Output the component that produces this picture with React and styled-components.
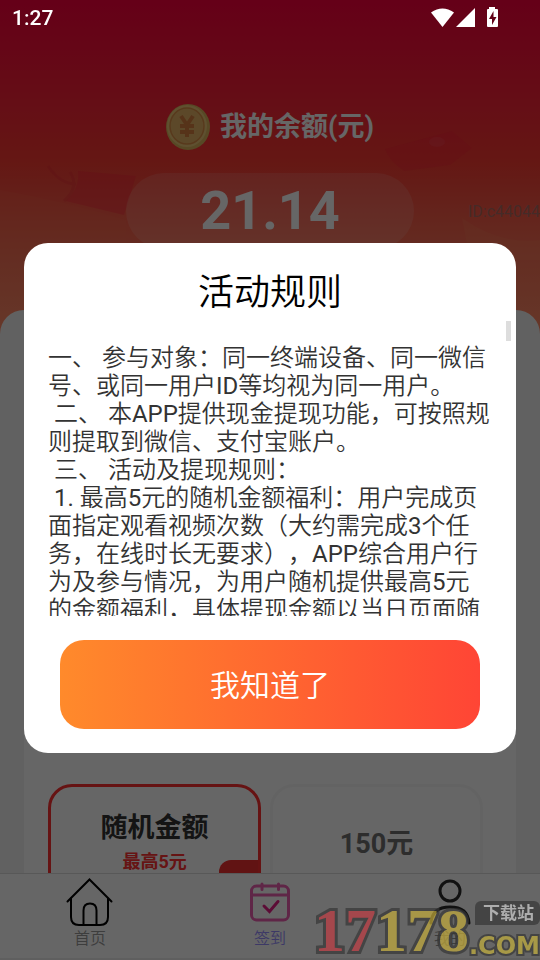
import React, { useState } from 'react';
import styled, { createGlobalStyle } from 'styled-components';

const GlobalStyle = createGlobalStyle`
  * {
    box-sizing: border-box;
  }
  body {
    margin: 0;
    font-family: Roboto, "Noto Sans CJK SC", sans-serif;
  }
  button {
    font-family: inherit;
    border: none;
    padding: 0;
    cursor: pointer;
  }
`;

const Screen = styled.div`
  display: flex;
  flex-direction: column;
  height: 100vh;
  overflow: hidden;
`;

const Content = styled.main`
  position: relative;
  flex: 1;
  min-height: 0;
  overflow: hidden;
  background: linear-gradient(#fc003c 0, #fc2338 100px, #fc3a32 160px, #fa5544 205px, #fa6e54 250px, #ff8a66 330px);
`;

const Decoration = styled.svg`
  position: absolute;
  top: 0;
  left: 0;
  width: 100%;
  height: 260px;
`;

const Header = styled.header`
  position: relative;
  padding-top: 104px;
`;

const BalanceTitle = styled.div`
  display: flex;
  align-items: center;
  justify-content: center;
  gap: 10px;
  height: 46px;
`;

const TitleText = styled.h1`
  margin: 0;
  color: #fff;
  font-size: 27px;
  font-weight: 700;
  line-height: 32px;
`;

const BalanceRow = styled.div`
  display: grid;
  grid-template-columns: 1fr 288px 1fr;
  align-items: center;
  margin: 23px 0 61px;
`;

const Amount = styled.div`
  grid-column: 2;
  height: 76px;
  border-radius: 38px;
  background: rgba(255, 255, 255, 0.12);
  color: #fff;
  font-size: 54px;
  font-weight: 700;
  line-height: 76px;
  text-align: center;
`;

const UserId = styled.div`
  padding-left: 54px;
  overflow: hidden;
  white-space: nowrap;
  color: rgba(120, 120, 120, 0.6);
  font-size: 16px;
`;

const Sheet = styled.section`
  position: relative;
  padding: 24px 24px 0;
  border-radius: 24px 24px 0 0;
  background: #f3f3f3;
`;

const Panel = styled.div`
  padding: 450px 24px 24px;
  border-radius: 24px;
  background: #fff;
`;

const Options = styled.div`
  display: flex;
  gap: 2%;
`;

const Option = styled.button`
  position: relative;
  display: flex;
  flex-direction: column;
  align-items: center;
  justify-content: center;
  width: 48%;
  height: 120px;
  overflow: hidden;
  border: 3px solid ${({ $active }) => ($active ? '#ff3030' : '#f8f8f8')};
  border-radius: 24px;
  background: #fff;
  color: ${({ $active }) => ($active ? '#333' : '#707070')};
`;

const OptionName = styled.span`
  font-size: 27px;
  font-weight: 700;
  line-height: 36px;
`;

const OptionNote = styled.span`
  color: #f33;
  font-size: 18px;
  font-weight: 700;
  line-height: 32px;
`;

const OptionBadge = styled.span`
  position: absolute;
  right: -3px;
  bottom: -3px;
  width: 42px;
  height: 44px;
  border-radius: 12px 0 0 0;
  background: #f33030;
`;

const TabBar = styled.nav`
  display: flex;
  border-top: 1px solid #ddd;
  border-bottom: 2px solid #eee;
  background: #fff;
`;

const Tab = styled.a`
  display: flex;
  flex: 1;
  flex-direction: column;
  align-items: center;
  padding: 4px 0 6px;
  color: ${({ $active }) => ($active ? '#9a90ff' : '#999')};
  font-size: 16px;
  font-weight: 350;
  line-height: 26px;
  text-decoration: none;
`;

const Overlay = styled.div`
  position: fixed;
  inset: 0;
  display: flex;
  align-items: center;
  justify-content: center;
  padding: 36px 24px 0;
  background: rgba(0, 0, 0, 0.6);
`;

const Modal = styled.div`
  position: relative;
  width: 100%;
  padding: 24px 0;
  border-radius: 24px;
  background: #fff;
`;

const ModalTitle = styled.h2`
  margin: 0;
  color: #000;
  font-size: 36px;
  font-weight: 350;
  line-height: 52px;
  text-align: center;
`;

const Rules = styled.div`
  height: 297px;
  margin-bottom: 24px;
  padding: 25px 24px 0;
  overflow-y: auto;
  scrollbar-width: none;
  color: #333;
  font-family: Roboto, "Noto Sans CJK SC DemiLight", "Noto Sans CJK SC", sans-serif;
  font-size: 24px;
  font-weight: 400;
  line-height: 28px;
  text-spacing-trim: space-all;
`;

const Rule = styled.p`
  margin: 0;
  white-space: pre-wrap;
`;

const ScrollThumb = styled.div`
  position: absolute;
  top: 78px;
  right: 5px;
  width: 5px;
  height: 20px;
  background: #ddd;
`;

const ConfirmButton = styled.button`
  display: block;
  width: calc(100% - 72px);
  height: 89px;
  margin: 0 auto;
  padding-bottom: 4px;
  border-radius: 24px;
  background: linear-gradient(90deg, #ff8a2b, #ff4535);
  color: #fff;
  font-size: 30px;
  font-weight: 350;
`;

const StatusBar = styled.div`
  position: fixed;
  top: 0;
  left: 0;
  right: 0;
  display: flex;
  align-items: center;
  justify-content: space-between;
  height: 36px;
  padding: 0 41px 0 12px;
  color: #fff;
`;

const Clock = styled.span`
  font-size: 21px;
  font-weight: 500;
`;

const Watermark = styled.div`
  position: fixed;
  right: 0;
  bottom: 0;
  display: flex;
  align-items: flex-end;
  opacity: 0.7;
  pointer-events: none;
`;

const Digits = styled.span`
  color: ${({ $color }) => $color};
  font-family: "Liberation Serif", serif;
  font-size: 62px;
  font-weight: 700;
  line-height: 60px;
  -webkit-text-stroke: 6px #373737;
  paint-order: stroke fill;
`;

const SiteColumn = styled.div`
  display: flex;
  flex-direction: column;
  gap: 7px;
`;

const SiteTag = styled.span`
  align-self: flex-end;
  padding: 0 6px 0 8px;
  border-radius: 6px 6px 6px 0;
  background: #373737;
  color: #ccc;
  font-size: 17px;
  font-weight: 700;
  line-height: 24px;
`;

const SiteDomain = styled.span`
  color: #c4b03b;
  font-family: "DejaVu Sans", sans-serif;
  font-size: 24px;
  font-weight: 700;
  line-height: 28px;
  -webkit-text-stroke: 4px #373737;
  paint-order: stroke fill;
`;

const CoinIcon = () => (
  <svg width="44" height="46" viewBox="0 0 44 46" aria-hidden="true">
    <ellipse cx="22" cy="23" rx="22" ry="23" fill="#d9b45c" />
    <ellipse cx="21" cy="22" rx="20" ry="21" fill="#eec878" />
    <ellipse cx="21" cy="22" rx="17" ry="18" fill="#e6b468" stroke="#dc9048" strokeWidth="1.5" />
    <path
      d="M15 12l6 9 6-9M21 21v12M14 22h14M14 28h14"
      fill="none"
      stroke="#d88040"
      strokeWidth="4"
    />
  </svg>
);

const Envelopes = () => (
  <Decoration viewBox="0 0 540 260" preserveAspectRatio="none" aria-hidden="true">
    <path d="M0 190Q60 200 126 220V260H0Z" fill="#ff7050" opacity="0.15" />
    <path d="M78 171L136 176 124 215 66 201Q80 188 78 171Z" fill="#fb1838" opacity="0.3" />
    <path d="M70 172Q80 187 64 201M48 166Q60 184 76 184" fill="none" stroke="#e01532" strokeWidth="3" opacity="0.2" />
    <path d="M385 149L452 131 472 148 450 165 404 171Q390 162 385 149Z" fill="#fb1838" opacity="0.25" />
    <ellipse cx="437" cy="142" rx="8" ry="5" fill="#ff5060" opacity="0.3" />
    <path d="M462 218Q500 245 540 240V260H470Z" fill="#ff8a60" opacity="0.2" />
  </Decoration>
);

const StatusIcons = () => (
  <svg width="68" height="22" viewBox="0 0 68 22" fill="#fff" aria-hidden="true">
    <path d="M0 5.500Q11.500-2.500 23 5.500L11.500 20Z" />
    <path d="M44 1V20H25Z" />
    <path d="M58 0h6v2h2q1 0 1 1v16q0 1-1 1h-9q-1 0-1-1V3q0-1 1-1h1Z" />
    <path d="M62.500 4L58 12h3v6l4.500-8h-3Z" fill="#620218" />
  </svg>
);

const HomeIcon = () => (
  <svg width="48" height="48" viewBox="0 0 48 48" fill="none" stroke="#000" strokeWidth="2" strokeLinecap="round" aria-hidden="true">
    <path d="M1.500 23.500L23.500 1.500 45.500 23.500" />
    <path d="M5 20.500V39q0 8 8 8h21q8 0 8-8V20.500" />
    <path d="M17.500 47V32.500q0-7 6.500-7t6.500 7V47" />
  </svg>
);

const CheckInIcon = () => (
  <svg width="48" height="48" viewBox="0 0 48 48" fill="none" stroke="#ee5fb1" strokeWidth="3" strokeLinecap="round" aria-hidden="true">
    <rect x="5.500" y="8" width="37" height="34" rx="5" />
    <path d="M5.500 17h37M16 6v5.500M32.500 6v5.500" />
    <path d="M18 28l5.500 5.500L32 23.500" stroke="#e61e87" />
  </svg>
);

const MineIcon = () => (
  <svg width="48" height="48" viewBox="0 0 48 48" fill="none" stroke="#2c2c2c" strokeWidth="3" strokeLinecap="round" aria-hidden="true">
    <circle cx="24" cy="13" r="10" />
    <path d="M5 45Q6 29 24 29T43 45" />
  </svg>
);

const rules = [
  '一、 参与对象：同一终端设备、同一微信号、或同一用户ID等均视为同一用户。',
  ' 二、 本APP提供现金提现功能，可按照规则提取到微信、支付宝账户。',
  ' 三、 活动及提现规则：',
  ' 1. 最高5元的随机金额福利：用户完成页面指定观看视频次数（大约需完成3个任务，在线时长无要求），APP综合用户行为及参与情况，为用户随机提供最高5元的金额福利，具体提现金额以当日页面随',
];

const App = () => {
  const [open, setOpen] = useState(true);

  return (
    <>
      <GlobalStyle />
      <Screen>
        <Content>
          <Envelopes />
          <Header>
            <BalanceTitle>
              <CoinIcon />
              <TitleText>我的余额(元)</TitleText>
            </BalanceTitle>
            <BalanceRow>
              <Amount>21.14</Amount>
              <UserId>ID:c44044</UserId>
            </BalanceRow>
          </Header>
          <Sheet>
            <Panel>
              <Options>
                <Option type="button" $active>
                  <OptionName>随机金额</OptionName>
                  <OptionNote>最高5元</OptionNote>
                  <OptionBadge />
                </Option>
                <Option type="button">
                  <OptionName>150元</OptionName>
                </Option>
              </Options>
            </Panel>
          </Sheet>
        </Content>
        <TabBar>
          <Tab href="#home">
            <HomeIcon />
            首页
          </Tab>
          <Tab href="#checkin" $active>
            <CheckInIcon />
            签到
          </Tab>
          <Tab href="#mine">
            <MineIcon />
            我的
          </Tab>
        </TabBar>
      </Screen>
      {open && (
        <Overlay>
          <Modal role="dialog" aria-modal="true" aria-labelledby="rules-title">
            <ModalTitle id="rules-title">活动规则</ModalTitle>
            <Rules>
              {rules.map((rule) => (
                <Rule key={rule}>{rule}</Rule>
              ))}
            </Rules>
            <ScrollThumb />
            <ConfirmButton type="button" onClick={() => setOpen(false)}>
              我知道了
            </ConfirmButton>
          </Modal>
        </Overlay>
      )}
      <StatusBar>
        <Clock>1:27</Clock>
        <StatusIcons />
      </StatusBar>
      <Watermark>
        <Digits $color="#c03b42">17</Digits>
        <Digits $color="#c4ac3b">178</Digits>
        <SiteColumn>
          <SiteTag>下载站</SiteTag>
          <SiteDomain>.COM</SiteDomain>
        </SiteColumn>
      </Watermark>
    </>
  );
};

export default App;
